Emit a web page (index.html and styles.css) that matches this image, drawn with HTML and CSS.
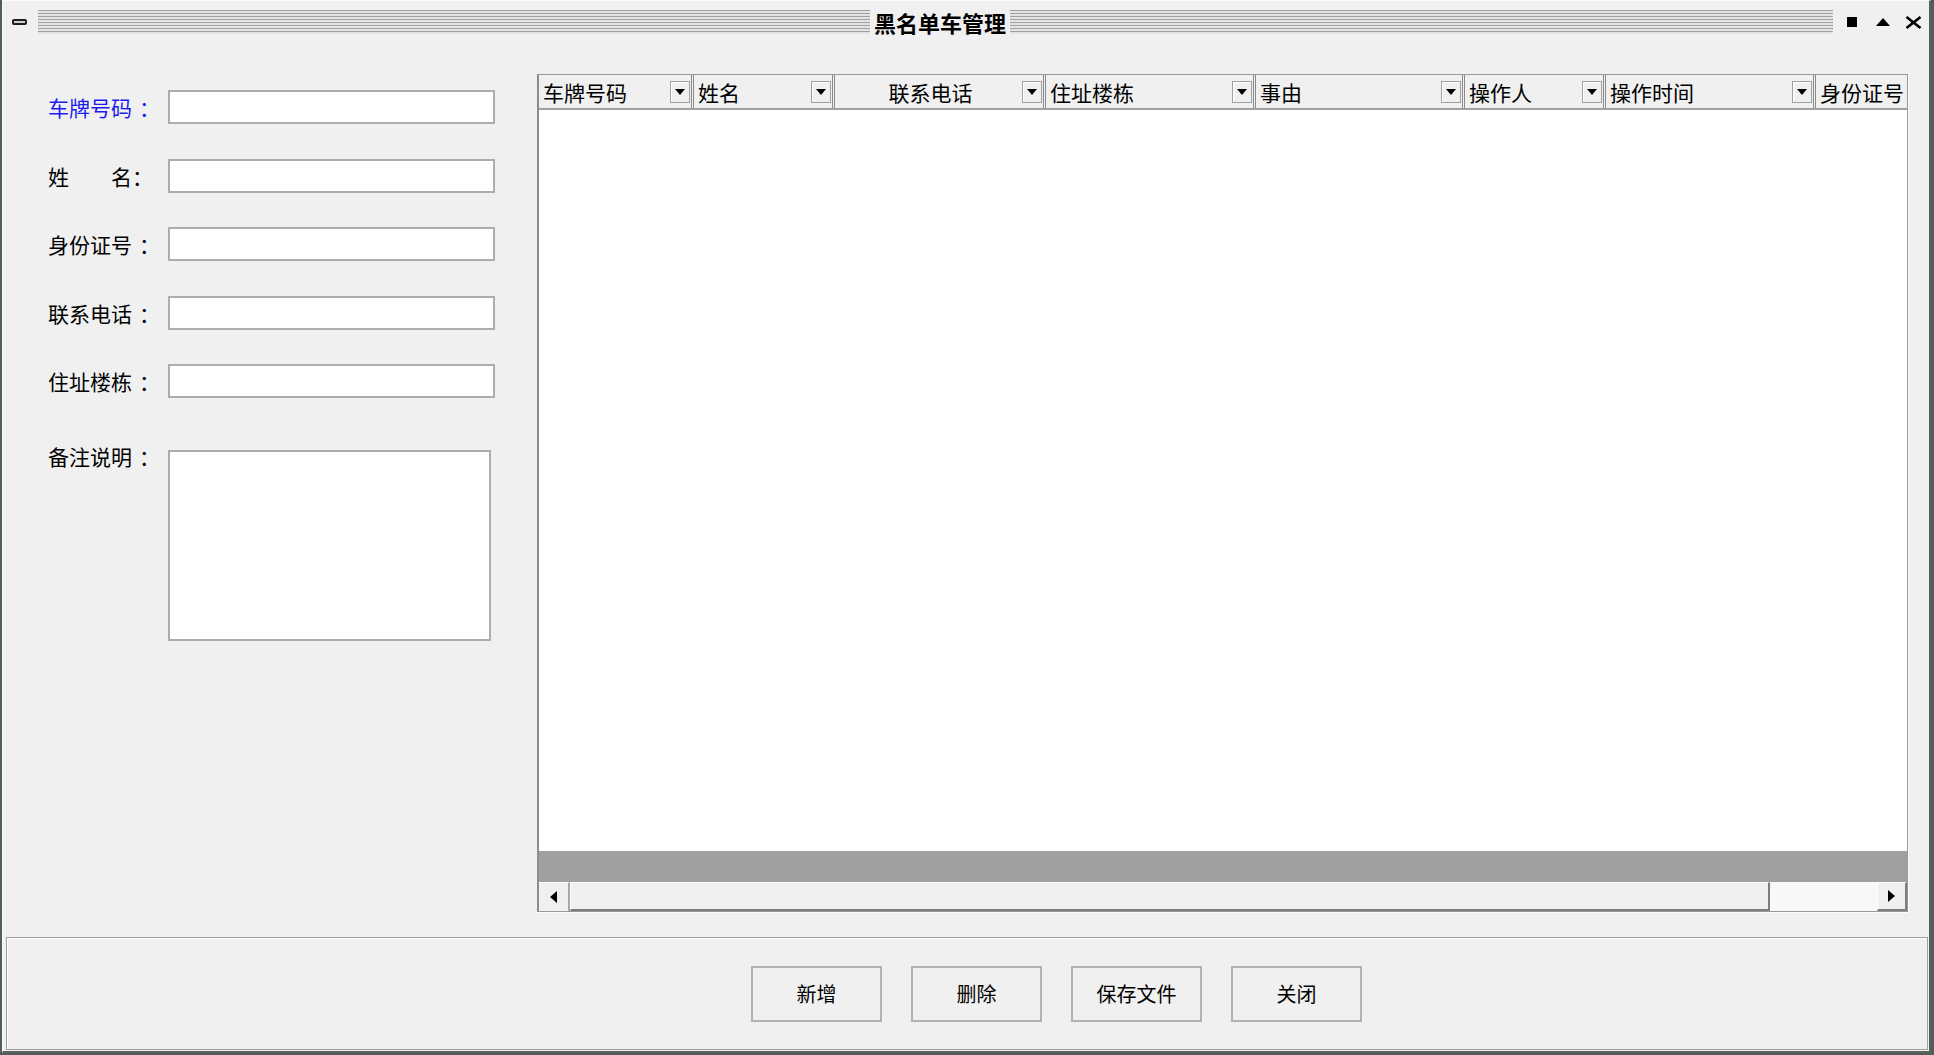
FILE: index.html
```html
<!DOCTYPE html>
<html lang="zh-CN">
<head>
<meta charset="utf-8">
<title>黑名单车管理</title>
<link rel="stylesheet" href="styles.css">
</head>
<body>
<div class="window">
  <div class="titlebar">
    <span class="sys-icon"></span>
    <div class="grip"><span class="title">黑名单车管理</span></div>
    <span class="cap-max"></span>
    <svg class="cap-up" width="14" height="8" viewBox="0 0 14 8"><polygon points="0,8 14,8 7,0" fill="#000"/></svg>
    <svg class="cap-close" width="17" height="13" viewBox="0 0 17 13"><path d="M1.5 1 L15.5 12 M15.5 1 L1.5 12" stroke="#000" stroke-width="2.6" fill="none"/></svg>
  </div>

  <div class="main">
    <div class="form">
      <div class="row"><span class="lbl lbl-active">车牌号码<span class="colon">：</span></span><input class="field" type="text"></div>
      <div class="row"><span class="lbl">姓　　名<span class="colon colon-tight">：</span></span><input class="field" type="text"></div>
      <div class="row"><span class="lbl">身份证号<span class="colon">：</span></span><input class="field" type="text"></div>
      <div class="row"><span class="lbl">联系电话<span class="colon">：</span></span><input class="field" type="text"></div>
      <div class="row"><span class="lbl">住址楼栋<span class="colon">：</span></span><input class="field" type="text"></div>
      <div class="row-memo"><span class="lbl lbl-memo">备注说明<span class="colon">：</span></span><textarea class="memo"></textarea></div>
    </div>

    <div class="grid">
      <div class="grid-head">
        <div class="hcell"><span class="htext">车牌号码</span><span class="dd"><svg width="10" height="6" viewBox="0 0 10 6"><polygon points="0,0 10,0 5,6" fill="#000"/></svg></span></div>
        <div class="hcell"><span class="htext">姓名</span><span class="dd"><svg width="10" height="6" viewBox="0 0 10 6"><polygon points="0,0 10,0 5,6" fill="#000"/></svg></span></div>
        <div class="hcell hcell-center"><span class="htext">联系电话</span><span class="dd"><svg width="10" height="6" viewBox="0 0 10 6"><polygon points="0,0 10,0 5,6" fill="#000"/></svg></span></div>
        <div class="hcell"><span class="htext">住址楼栋</span><span class="dd"><svg width="10" height="6" viewBox="0 0 10 6"><polygon points="0,0 10,0 5,6" fill="#000"/></svg></span></div>
        <div class="hcell"><span class="htext">事由</span><span class="dd"><svg width="10" height="6" viewBox="0 0 10 6"><polygon points="0,0 10,0 5,6" fill="#000"/></svg></span></div>
        <div class="hcell"><span class="htext">操作人</span><span class="dd"><svg width="10" height="6" viewBox="0 0 10 6"><polygon points="0,0 10,0 5,6" fill="#000"/></svg></span></div>
        <div class="hcell"><span class="htext">操作时间</span><span class="dd"><svg width="10" height="6" viewBox="0 0 10 6"><polygon points="0,0 10,0 5,6" fill="#000"/></svg></span></div>
        <div class="hcell"><span class="htext">身份证号</span><span class="dd"><svg width="10" height="6" viewBox="0 0 10 6"><polygon points="0,0 10,0 5,6" fill="#000"/></svg></span></div>
      </div>
      <div class="grid-body"></div>
      <div class="grid-band"></div>
      <div class="hscroll">
        <div class="sb-left"><svg width="7" height="12" viewBox="0 0 7 12"><polygon points="7,0 7,12 0,6" fill="#000"/></svg></div>
        <div class="sb-thumb"></div>
        <div class="sb-track"></div>
        <div class="sb-right"><svg width="7" height="12" viewBox="0 0 7 12"><polygon points="0,0 0,12 7,6" fill="#000"/></svg></div>
      </div>
    </div>
  </div>

  <div class="footer">
    <button class="btn" type="button">新增</button>
    <button class="btn" type="button">删除</button>
    <button class="btn" type="button">保存文件</button>
    <button class="btn" type="button">关闭</button>
  </div>
</div>
</body>
</html>
```

FILE: styles.css
```css
html, body {
  margin: 0;
  padding: 0;
  width: 1934px;
  height: 1055px;
  overflow: hidden;
  background: #4d5f56;
  font-family: "Noto Sans CJK SC", "Noto Sans", sans-serif;
  color: #000;
}

.window {
  box-sizing: border-box;
  margin-left: 2px;
  width: 1929px;
  height: 1053px;
  background: #f0f0f0;
  border-left: 1px solid #fbfbfb;
  border-top: 1px solid #fbfbfb;
  border-right: 2px solid #5f5f5f;
  border-bottom: 2px solid #5f5f5f;
  display: flex;
  flex-direction: column;
}

/* title bar */
.titlebar {
  display: flex;
  align-items: center;
  height: 24px;
  margin-top: 9px;
  padding-left: 9px;
  padding-right: 7px;
}

.sys-icon {
  box-sizing: border-box;
  width: 15px;
  height: 6px;
  border: 2px solid #1e1e1e;
  border-radius: 2px;
  background: #cfcfcf;
  flex: none;
}

.grip {
  flex: 1;
  height: 24px;
  margin: 0 14px 0 11px;
  padding-left: 9px;
  background: repeating-linear-gradient(to bottom, #a2a2a2 0 1px, #e4e4e4 1px 3px);
  display: flex;
  justify-content: center;
  align-items: center;
}

.title {
  background: #f0f0f0;
  padding: 0 4px;
  font-size: 22px;
  font-weight: bold;
  line-height: 24px;
}

.cap-max {
  width: 10px;
  height: 10px;
  background: #000;
  margin-right: 19px;
  flex: none;
}

.cap-up {
  margin-right: 15px;
  flex: none;
}

.cap-close {
  flex: none;
}

/* main */
.main {
  display: flex;
  margin-top: 40px;
  height: 838px;
}

.form {
  box-sizing: border-box;
  width: 534px;
  padding-left: 45px;
  padding-top: 16px;
  display: flex;
  flex-direction: column;
  gap: 34.5px;
}

.row {
  display: flex;
  align-items: center;
  height: 34px;
}

.row-memo {
  display: flex;
  align-items: flex-start;
  margin-top: 17.5px;
}

.lbl {
  width: 120px;
  font-size: 21px;
  line-height: 24px;
  white-space: nowrap;
  flex: none;
}

.colon {
  margin-left: 7px;
}

.colon-tight {
  margin-left: 0;
}

.lbl-active {
  color: #1c1cf0;
}

.lbl-memo {
  margin-top: -6px;
}

.field {
  box-sizing: border-box;
  width: 327px;
  height: 34px;
  margin: 0;
  padding: 0 4px;
  border: 2px solid #adadad;
  background: #fff;
  font-size: 20px;
  font-family: inherit;
  outline: none;
}

.memo {
  box-sizing: border-box;
  width: 323px;
  height: 191px;
  margin: 0;
  padding: 2px 4px;
  border: 2px solid #adadad;
  background: #fff;
  resize: none;
  font-size: 20px;
  font-family: inherit;
  outline: none;
}

/* grid */
.grid {
  box-sizing: border-box;
  width: 1371px;
  height: 838px;
  border: 1px solid #989898;
  border-left: 2px solid #8c8c8c;
  box-shadow: 1px 1px 0 #fcfcfc;
  background: #fff;
  display: flex;
  flex-direction: column;
  overflow: hidden;
}

.grid-head {
  display: grid;
  grid-template-columns: 155px 141px 211px 210px 209px 141px 210px 210px;
  height: 33px;
  flex: none;
  border-bottom: 2px solid #a0a0a0;
  background: #f0f0f0;
  overflow: hidden;
}

.hcell {
  box-sizing: border-box;
  display: flex;
  align-items: center;
  padding-left: 4px;
  border-right: 3px double #8a8a8a;
  font-size: 21px;
  line-height: 24px;
  white-space: nowrap;
  overflow: hidden;
  min-width: 0;
}

.htext {
  flex: 1;
  text-align: left;
}

.hcell-center .htext {
  text-align: center;
}

.dd {
  box-sizing: border-box;
  width: 20px;
  height: 22px;
  margin-right: 1px;
  border: 1px solid #a0a0a0;
  box-shadow: inset 1px 1px 0 #fff;
  background: #f0f0f0;
  display: flex;
  align-items: center;
  justify-content: center;
  flex: none;
}

.grid-body {
  flex: 1;
  background: #fff;
}

.grid-band {
  height: 31px;
  flex: none;
  background: #a0a0a0;
}

.hscroll {
  height: 29px;
  flex: none;
  display: flex;
  background: #f0f0f0;
}

.sb-left {
  box-sizing: border-box;
  width: 31px;
  border-top: 1px solid #fff;
  border-right: 2px solid #a8a8a8;
  display: flex;
  align-items: center;
  justify-content: center;
}

.sb-thumb {
  box-sizing: border-box;
  width: 1200px;
  border-top: 1px solid #fff;
  border-left: 1px solid #fff;
  border-right: 2px solid #7d7d7d;
  border-bottom: 2px solid #7d7d7d;
  background: #f0f0f0;
}

.sb-track {
  width: 107px;
  background: #f8f8f8;
}

.sb-right {
  box-sizing: border-box;
  width: 30px;
  border-top: 1px solid #fff;
  border-left: 1px solid #fff;
  border-right: 2px solid #7d7d7d;
  border-bottom: 2px solid #7d7d7d;
  background: #f0f0f0;
  display: flex;
  align-items: center;
  justify-content: center;
}

/* footer */
.footer {
  box-sizing: border-box;
  height: 113px;
  margin: 25px 1px 0 3px;
  border: 1px solid #a0a0a0;
  box-shadow: inset 1px 1px 0 #fff;
  display: flex;
  align-items: center;
  padding-left: 744px;
  gap: 29px;
}

.btn {
  box-sizing: border-box;
  width: 131px;
  height: 56px;
  margin: 0;
  padding: 0;
  border: 2px solid #b2b2b2;
  background: #f0f0f0;
  font-size: 20px;
  font-family: inherit;
  color: #000;
}
```
